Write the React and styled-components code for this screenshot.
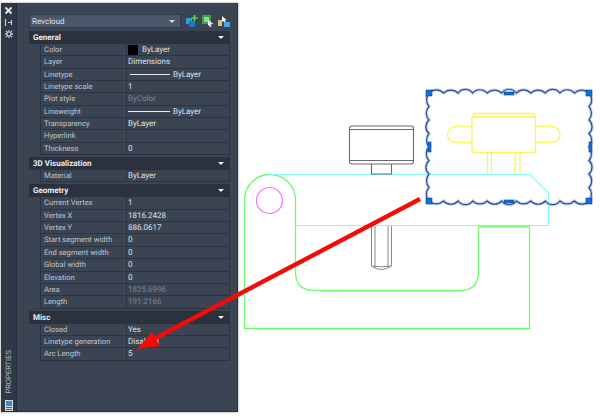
import React from 'react';
import styled, { createGlobalStyle } from 'styled-components';

const GlobalStyle = createGlobalStyle`
  html, body { margin: 0; padding: 0; background: #ffffff; }
  body {
    width: 600px;
    height: 418px;
    overflow: hidden;
    font-family: Roboto, "Liberation Sans", sans-serif;
    text-rendering: geometricPrecision;
  }
`;

const Page = styled.div`
  position: relative;
  width: 600px;
  height: 418px;
  display: flex;
  align-items: flex-start;
  padding: 3px 0 0 1px;
  box-sizing: border-box;
`;

const Palette = styled.div`
  width: 237px;
  height: 409px;
  box-sizing: border-box;
  display: flex;
  background: #3b4453;
  border-right: 1px solid #2a303a;
  border-bottom: 1px solid #2a303a;
  box-shadow: 0 0 2px rgba(0, 0, 0, 0.45);
`;

const Strip = styled.div`
  width: 16px;
  flex: none;
  background: #2f3846;
  border-right: 1px solid #262d38;
  display: flex;
  flex-direction: column;
  align-items: center;
  padding-top: 1px;
  box-sizing: border-box;
`;

const StripIcon = styled.div`
  height: 12px;
  display: flex;
  align-items: center;
  justify-content: center;
  color: #d5d9df;
`;

const StripLabel = styled.div`
  margin-top: auto;
  writing-mode: vertical-rl;
  transform: rotate(180deg);
  font-size: 7.6px;
  color: #aeb6c2;
`;

const DocIcon = styled(StripIcon)`
  height: 12px;
  margin-top: 5px;
`;

const Main = styled.div`
  flex: 1;
  padding: 11px 9px 0 12px;
  display: flex;
  flex-direction: column;
`;

const TopBar = styled.div`
  display: flex;
  align-items: center;
  height: 14px;
  margin-bottom: 3px;
`;

const Select = styled.div`
  width: 152px;
  height: 14px;
  background: #4a5669;
  border: 1px solid #333b49;
  box-sizing: border-box;
  display: flex;
  align-items: center;
  justify-content: space-between;
  padding: 0 5px 0 2px;
  font-size: 8px;
  color: #dfe3e8;
`;

const Caret = styled.span`
  width: 0;
  height: 0;
  border-left: 3px solid transparent;
  border-right: 3px solid transparent;
  border-top: 3px solid ${p => p.$light ? '#f0f2f5' : '#d6dae0'};
`;

const Tools = styled.div`
  display: flex;
  gap: 4px;
  margin-left: 5px;
`;

const SectionHead = styled.div`
  height: 13px;
  background: #2b323e;
  display: flex;
  align-items: center;
  justify-content: space-between;
  padding: 0 6px 0 4px;
  font-size: 8px;
  font-weight: 700;
  color: #e8ebef;
  margin-top: ${p => p.$first ? 0 : 2}px;
`;

const Rows = styled.div`
  margin-left: 11px;
  border-right: 1px solid #2d3440;
`;

const Row = styled.div`
  height: 12.35px;
  box-sizing: border-box;
  display: grid;
  grid-template-columns: 87px 1fr;
  border-bottom: 1px solid #2d3440;
  font-size: 8px;
  line-height: 11.5px;
`;

const Name = styled.div`
  padding-left: 3px;
  font-size: 7.6px;
  color: #bfc5ce;
  white-space: nowrap;
  border-left: 1px solid #2d3440;
  border-right: 1px solid #2d3440;
`;

const Value = styled.div`
  padding-left: 1px;
  display: flex;
  align-items: center;
  color: ${p => p.$dim ? '#7b8492' : '#dde1e6'};
  white-space: nowrap;
`;

const Swatch = styled.span`
  width: 10px;
  height: 10px;
  background: #000;
  margin-right: 4px;
`;

const LineSample = styled.span`
  width: ${p => p.$w}px;
  height: 1px;
  margin-left: ${p => p.$left}px;
  margin-right: 3px;
  background: #e4e7ec;
`;

const Canvas = styled.svg`
  position: absolute;
  left: 0;
  top: 0;
  pointer-events: none;
`;

const sections = [
  {
    title: 'General',
    rows: [
      ['Color', <><Swatch />ByLayer</>],
      ['Layer', 'Dimensions'],
      ['Linetype', <><LineSample $w={40} $left={2} />ByLayer</>],
      ['Linetype scale', '1'],
      ['Plot style', 'ByColor', true],
      ['Lineweight', <><LineSample $w={42} $left={0} />ByLayer</>],
      ['Transparency', 'ByLayer'],
      ['Hyperlink', ''],
      ['Thickness', '0'],
    ],
  },
  { title: '3D Visualization', rows: [['Material', 'ByLayer']] },
  {
    title: 'Geometry',
    rows: [
      ['Current Vertex', '1'],
      ['Vertex X', '1816.2428'],
      ['Vertex Y', '886.0617'],
      ['Start segment width', '0'],
      ['End segment width', '0'],
      ['Global width', '0'],
      ['Elevation', '0'],
      ['Area', '1825.6996', true],
      ['Length', '191.2166', true],
    ],
  },
  {
    title: 'Misc',
    rows: [
      ['Closed', 'Yes'],
      ['Linetype generation', 'Disabled'],
      ['Arc Length', '5'],
    ],
  },
];

// scallops of the revision cloud, walked clockwise so they bulge outward
const cloud = (() => {
  const pts = [[429, 93], [589, 93], [589, 201], [429, 201]];
  const counts = [11, 8, 11, 8];
  let d = `M${pts[0][0]} ${pts[0][1]}`;
  pts.forEach((p, i) => {
    const q = pts[(i + 1) % 4];
    const n = counts[i];
    for (let k = 1; k <= n; k++) {
      const x = p[0] + ((q[0] - p[0]) * k) / n;
      const y = p[1] + ((q[1] - p[1]) * k) / n;
      const r = 9 + ((k * 7 + i * 3) % 3) * 0.8;
      d += ` A${r} ${r} 0 0 1 ${x.toFixed(1)} ${y.toFixed(1)}`;
    }
  });
  return d + 'Z';
})();

const grips = [
  [426, 90, 6, 6], [504, 92, 10, 3], [586, 90, 6, 6],
  [428, 142, 3, 10], [589, 142, 3, 10],
  [426, 198, 6, 6], [504, 200, 10, 3], [586, 198, 6, 6],
];

const Drawing = () => (
  <Canvas width="600" height="418" viewBox="0 0 600 418" fill="none">
    <path d="M244.5 200 V328.5 H529.5 V226.5 H478.5 V272 Q478.5 290.5 460 290.5 H314 Q295.5 290.5 295.5 272 V200 A25.5 25.5 0 0 0 244.5 200Z" stroke="#6dfa6d" strokeWidth="1.3" />
    <path d="M270 174.5 H530 L548.5 193 V225.5 H295.5" stroke="#7ffcfc" strokeWidth="1.2" />
    <circle cx="269.5" cy="200.5" r="13" stroke="#fb6ffb" strokeWidth="1.2" />
    <g stroke="#6a6a6a" strokeWidth="1.1">
      <path d="M352 126 H411 Q413.5 126 413.5 128.5 V161.5 Q413.5 164 411 164 H352 Q349.5 164 349.5 161.5 V128.5 Q349.5 126 352 126Z" />
      <path d="M349.5 129.5 H413.5 M349.5 160.5 H413.5" />
      <path d="M371.5 164 V174 H391.5 V164" />
    </g>
    <path d="M371.5 226 V266 Q381 273 391.5 266 V226 M375 226 V268 M388 226 V268 M371.5 266 Q381 267.5 391.5 266" stroke="#8a8a8a" />
    <g stroke="#f8f65e" strokeWidth="1.3">
      <path d="M472 117 H535.5 V152.5 H472Z M472 117 L475 113.5 H533 L535.5 117" />
      <path d="M472 126.5 H455.5 A8 8 0 0 0 455.5 142.5 H472 M535.5 126.5 H552 A8 8 0 0 1 552 142.5 H535.5" />
      <path d="M487.5 152.5 V174 M491.5 152.5 V174 M515 152.5 V174 M520 152.5 V174" />
    </g>
    <path d={cloud} stroke="#c4d6f0" strokeWidth="3.2" />
    <path d={cloud} stroke="#2c4f8c" strokeWidth="1.2" />
    {grips.map(([x, y, w, h]) => (
      <rect key={`${x}-${y}`} x={x} y={y} width={w} height={h} fill="#0a72e6" stroke="#173a70" strokeWidth="0.6" />
    ))}
    <path d="M420 199 L150 341" stroke="#f50a0a" strokeWidth="4.4" />
    <path d="M137 349 L152 332 L160 346Z" fill="#f50a0a" />
  </Canvas>
);

const App = () => (
  <>
    <GlobalStyle />
    <Page>
      <Palette>
        <Strip>
          <StripIcon>
            <svg width="9" height="9" viewBox="0 0 9 9"><path d="M1.5 1.5 L7.5 7.5 M7.5 1.5 L1.5 7.5" stroke="#e8ebef" strokeWidth="1.8" /></svg>
          </StripIcon>
          <StripIcon>
            <svg width="9" height="9" viewBox="0 0 9 9"><path d="M1.5 1 V8 M4 4.5 H7 M7.5 2 V7" stroke="#c9ced6" strokeWidth="1.2" /></svg>
          </StripIcon>
          <StripIcon>
            <svg width="10" height="10" viewBox="0 0 10 10"><path d="M5 1 V9 M1 5 H9 M2 2 L8 8 M8 2 L2 8" stroke="#c9ced6" strokeWidth="1.3" /><circle cx="5" cy="5" r="1.4" fill="#2f3846" /></svg>
          </StripIcon>
          <StripLabel>PROPERTIES</StripLabel>
          <DocIcon>
            <svg width="8" height="11" viewBox="0 0 8 11"><rect width="8" height="11" fill="#d6dade" /><rect x="1" y="1" width="6" height="5" fill="#2f8fe0" /><path d="M1 7.5 H7 M1 9.5 H7" stroke="#59606c" /></svg>
          </DocIcon>
        </Strip>
        <Main>
          <TopBar>
            <Select>Revcloud<Caret /></Select>
            <Tools>
              <svg width="12" height="12" viewBox="0 0 12 12"><rect x="0" y="3" width="6" height="6" fill="#2f9fe0" /><rect x="3" y="6" width="6" height="6" fill="#1f78c0" /><path d="M8.5 0 V6 M5.5 3 H11.5" stroke="#53d853" strokeWidth="1.6" /></svg>
              <svg width="12" height="12" viewBox="0 0 12 12"><rect x="0" y="0" width="9" height="9" fill="#3fa04f" /><rect x="2" y="2" width="5" height="5" fill="#8fd88f" /><path d="M6 5 L11.5 9 L8.5 9.5 L9.5 12 L8 12 L7 10 L6 11Z" fill="#f4f6f8" /></svg>
              <svg width="12" height="12" viewBox="0 0 12 12"><path d="M4 1 V7 L5.5 6 L7 9 L8 8.5 L7 5.5 L8.5 5Z" fill="#f4f6f8" /><rect x="0" y="5" width="4" height="6" fill="#d9c27a" /><rect x="6" y="7" width="6" height="5" fill="#4aa5e8" /></svg>
            </Tools>
          </TopBar>
          {sections.map((s, i) => (
            <div key={s.title}>
              <SectionHead $first={i === 0}>{s.title}<Caret $light /></SectionHead>
              <Rows>
                {s.rows.map(([name, value, dim]) => (
                  <Row key={name}>
                    <Name>{name}</Name>
                    <Value $dim={dim}>{value}</Value>
                  </Row>
                ))}
              </Rows>
            </div>
          ))}
        </Main>
      </Palette>
      <Drawing />
    </Page>
  </>
);

export default App;
